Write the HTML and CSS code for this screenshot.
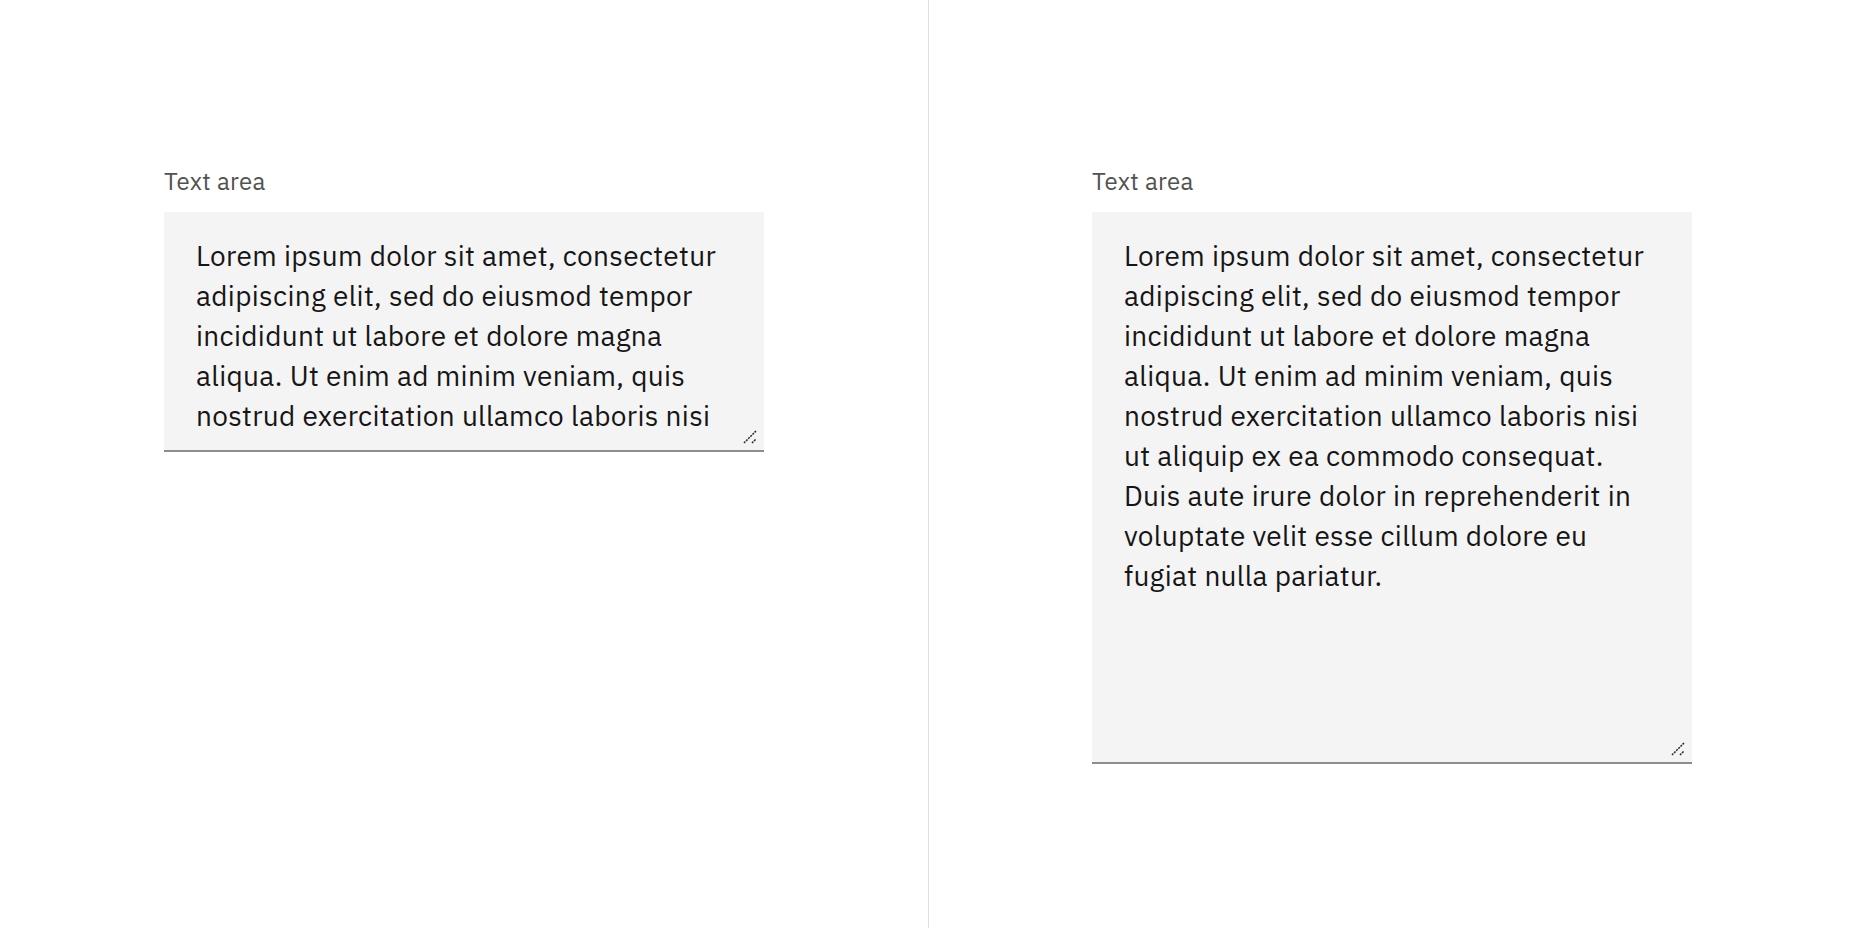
FILE: index.html
```html
<!DOCTYPE html>
<html lang="en">
<head>
<meta charset="utf-8">
<title>Text area</title>
<link rel="stylesheet" href="styles.css">
</head>
<body>
<main class="page">
  <section class="pane pane-left">
    <div class="field">
      <label class="label" for="ta1">Text area</label>
      <div class="textarea-wrap">
        <textarea id="ta1" class="textarea textarea-short" wrap="off">Lorem ipsum dolor sit amet, consectetur
adipiscing elit, sed do eiusmod tempor
incididunt ut labore et dolore magna
aliqua. Ut enim ad minim veniam, quis
nostrud exercitation ullamco laboris nisi</textarea>
        <svg class="grip" width="14" height="14" viewBox="0 0 14 14" aria-hidden="true">
          <path d="M1 13 L13 1" stroke="#2a2a2a" stroke-width="1.5" stroke-dasharray="2 1" fill="none"/>
          <path d="M9 13 L13 9" stroke="#2a2a2a" stroke-width="1.5" stroke-dasharray="2 1" fill="none"/>
        </svg>
      </div>
    </div>
  </section>
  <div class="divider"></div>
  <section class="pane pane-right">
    <div class="field">
      <label class="label" for="ta2">Text area</label>
      <div class="textarea-wrap">
        <textarea id="ta2" class="textarea textarea-tall" wrap="off">Lorem ipsum dolor sit amet, consectetur
adipiscing elit, sed do eiusmod tempor
incididunt ut labore et dolore magna
aliqua. Ut enim ad minim veniam, quis
nostrud exercitation ullamco laboris nisi
ut aliquip ex ea commodo consequat.
Duis aute irure dolor in reprehenderit in
voluptate velit esse cillum dolore eu
fugiat nulla pariatur.</textarea>
        <svg class="grip" width="14" height="14" viewBox="0 0 14 14" aria-hidden="true">
          <path d="M1 13 L13 1" stroke="#2a2a2a" stroke-width="1.5" stroke-dasharray="2 1" fill="none"/>
          <path d="M9 13 L13 9" stroke="#2a2a2a" stroke-width="1.5" stroke-dasharray="2 1" fill="none"/>
        </svg>
      </div>
    </div>
  </section>
</main>
</body>
</html>
```
FILE: styles.css
```css
* { box-sizing: border-box; }
html, body {
  margin: 0;
  padding: 0;
  background: #ffffff;
  font-family: "IBM Plex Sans", "Noto Sans", "Liberation Sans", sans-serif;
}
.page {
  display: flex;
  width: 1856px;
  height: 928px;
}
.pane {
  flex: 1 1 0;
  padding-top: 165px;
}
.pane-left { padding-left: 164px; }
.pane-right { padding-left: 163px; }
.divider {
  width: 1px;
  background: #e0e0e0;
}
.field {
  display: flex;
  flex-direction: column;
  width: 600px;
}
.label {
  font-size: 24px;
  line-height: 32px;
  color: #525252;
  margin-bottom: 15px;
  letter-spacing: 0.32px;
}
.textarea-wrap {
  position: relative;
  width: 600px;
}
.textarea {
  display: block;
  width: 600px;
  margin: 0;
  padding: 24px 32px 20px;
  border: none;
  border-bottom: 2px solid #8d8d8d;
  border-radius: 0;
  background: #f4f4f4;
  color: #161616;
  font-family: inherit;
  font-size: 28px;
  line-height: 40px;
  letter-spacing: 0.32px;
  overflow: hidden;
  resize: none;
  outline: none;
  white-space: pre;
}
.textarea-short { height: 240px; }
.textarea-tall { height: 552px; }
.grip {
  position: absolute;
  right: 7px;
  bottom: 8px;
}
```
